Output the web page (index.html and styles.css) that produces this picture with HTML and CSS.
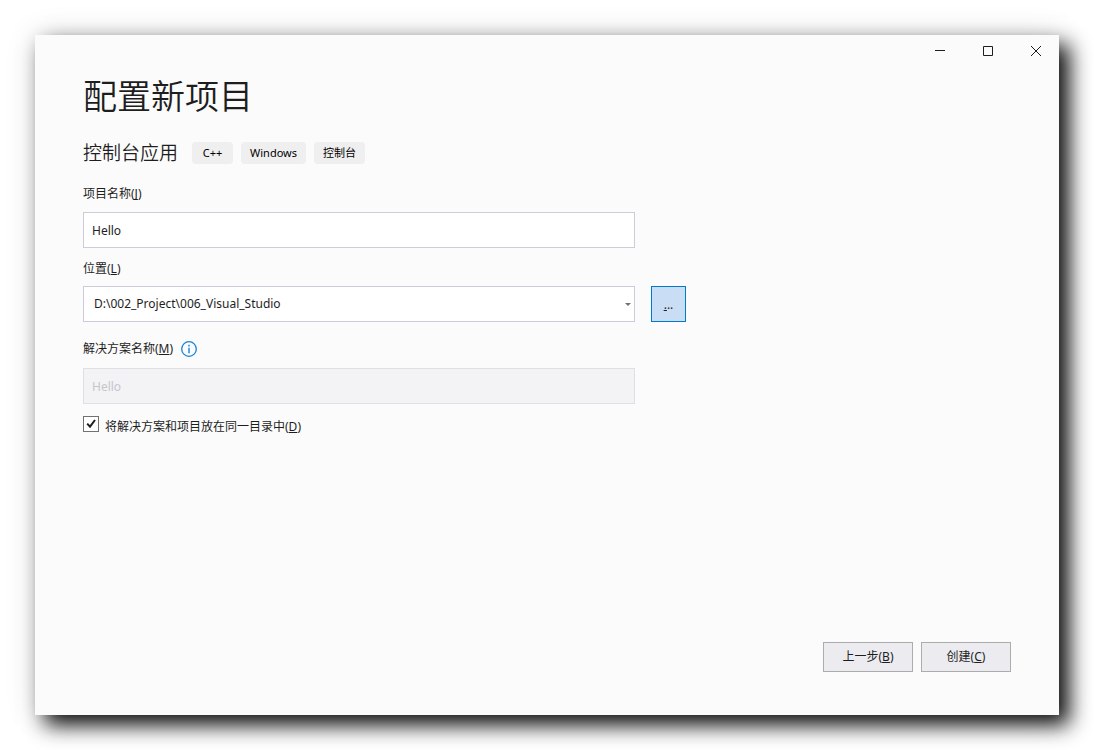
FILE: index.html
```html
<!DOCTYPE html>
<html lang="zh-CN">
<head>
<meta charset="utf-8">
<meta name="viewport" content="width=device-width, initial-scale=1">
<title>配置新项目</title>
<link rel="stylesheet" href="styles.css">
</head>
<body>
<main class="window">
  <header class="titlebar">
    <button class="caption-button" type="button" aria-label="最小化">
      <svg width="12" height="12" viewBox="0 0 12 12" shape-rendering="crispEdges"><path d="M2 5h10v1H2z" fill="#1e1e1e"/></svg>
    </button>
    <button class="caption-button" type="button" aria-label="最大化">
      <svg width="12" height="12" viewBox="0 0 12 12"><path d="M2.5 1.5h9v9h-9z" fill="none" stroke="#1e1e1e"/></svg>
    </button>
    <button class="caption-button" type="button" aria-label="关闭">
      <svg width="12" height="12" viewBox="0 0 12 12"><path d="M2 1l10 10M12 1L2 11" fill="none" stroke="#1e1e1e"/></svg>
    </button>
  </header>
  <form class="content">
    <h1 class="title">配置新项目</h1>
    <div class="template">
      <h2 class="template-name">控制台应用</h2>
      <ul class="tags">
        <li class="tag">C++</li>
        <li class="tag">Windows</li>
        <li class="tag">控制台</li>
      </ul>
    </div>

    <div class="field">
      <label class="label" for="project">项目名称(<u>J</u>)</label>
      <input class="box" id="project" type="text" value="Hello">
    </div>

    <div class="field">
      <label class="label" for="location">位置(<u>L</u>)</label>
      <div class="location">
        <div class="combo">
          <select class="box combo-box" id="location">
            <option>D:\002_Project\006_Visual_Studio</option>
          </select>
          <svg class="arrow" width="6" height="3" viewBox="0 0 6 3"><path d="M0 0h6L3 3z" fill="#717171"/></svg>
        </div>
        <button class="browse" type="button" aria-label="浏览"><u>.</u>..</button>
      </div>
    </div>

    <div class="field solution">
      <div class="label-row">
        <label class="label" for="solution">解决方案名称(<u>M</u>)</label>
        <svg width="16" height="16" viewBox="0 0 16 16"><circle cx="8" cy="8" r="7.3" fill="none" stroke="#1583d8" stroke-width="1.3"/><path d="M7.3 3.8h1.4v1.6H7.3zM7.3 6.8h1.4v5.4H7.3z" fill="#1583d8"/></svg>
      </div>
      <input class="box" id="solution" type="text" value="Hello" disabled>
    </div>

    <div class="check-row">
      <span class="check">
        <input class="check-input" id="same" type="checkbox" checked>
        <svg class="check-mark" width="16" height="16" viewBox="0 0 16 16"><path d="M4.2 7.6L7 10.6 12 4" fill="none" stroke="#1e1e1e" stroke-width="2"/></svg>
      </span>
      <label class="check-label" for="same">将解决方案和项目放在同一目录中(<u>D</u>)</label>
    </div>

    <footer class="actions">
      <button class="action" type="button">上一步(<u>B</u>)</button>
      <button class="action" type="submit">创建(<u>C</u>)</button>
    </footer>
  </form>
</main>
</body>
</html>
```
FILE: styles.css
```css
* {
  box-sizing: border-box;
}

body {
  margin: 0;
  padding: 35px;
  min-height: 100vh;
  display: flex;
  background: #fff;
  color: #1e1e1e;
  font: 12px/16px "Noto Sans", "Noto Sans CJK SC", sans-serif;
}

button,
input,
select {
  font: inherit;
  color: inherit;
}

u {
  text-underline-offset: 1px;
  text-decoration-skip-ink: none;
}

.window {
  flex: 1;
  display: flex;
  flex-direction: column;
  background: #fbfbfb;
  box-shadow: 10px 10px 20px rgba(0, 0, 0, 0.95), 0 0 30px rgba(0, 0, 0, 0.12);
}

.titlebar {
  display: flex;
  justify-content: flex-end;
}

.caption-button {
  display: grid;
  place-items: center;
  width: 48px;
  height: 32px;
  padding: 0;
  border: 0;
  background: transparent;
}

.content {
  flex: 1;
  display: flex;
  flex-direction: column;
  padding: 4px 48px 43px;
}

.title {
  margin: 0;
  font-size: 34px;
  line-height: 50px;
  font-weight: 350;
}

.template {
  display: flex;
  align-items: center;
  gap: 14px;
  margin-top: 18px;
}

.template-name {
  margin: 0;
  font-size: 19px;
  line-height: 28px;
  font-weight: 350;
}

.tags {
  display: flex;
  gap: 8px;
  margin: 0;
  padding: 0;
  list-style: none;
}

.tag {
  min-width: 41px;
  padding: 3px 9px;
  border-radius: 4px;
  background: #efeff0;
  color: #000;
  font-size: 11px;
  text-align: center;
}

.field {
  display: flex;
  flex-direction: column;
  gap: 9px;
  max-width: 552px;
  margin-top: 13px;
}

.template + .field {
  gap: 10px;
  margin-top: 19px;
}

.box {
  width: 100%;
  height: 36px;
  padding: 0 8px;
  border: 1px solid #ccccda;
  border-radius: 0;
  background: #fff;
}

.box:disabled {
  border-color: #dfdfe6;
  background: #f3f3f6;
  color: #c6c6ca;
}

.location {
  display: flex;
  gap: 16px;
}

.combo {
  position: relative;
  flex: 0 0 100%;
}

.combo-box {
  display: block;
  appearance: none;
  padding: 0 10px;
}

.arrow {
  position: absolute;
  right: 4px;
  top: 17px;
  pointer-events: none;
}

.browse {
  flex: 0 0 35px;
  padding: 2px 0 0;
  border: 1px solid #007acc;
  background: #c9def5;
}

.field.solution {
  gap: 11px;
  margin-top: 19px;
}

.label-row {
  display: flex;
  align-items: center;
  gap: 8px;
}

.check-row {
  display: flex;
  gap: 6px;
  margin-top: 12px;
}

.check {
  position: relative;
  display: flex;
  align-self: flex-start;
}

.check-input {
  appearance: none;
  width: 16px;
  height: 16px;
  margin: 0;
  border: 1px solid #717171;
  background: #fff;
}

.check-mark {
  position: absolute;
  inset: 0;
  display: none;
  pointer-events: none;
}

.check-input:checked + .check-mark {
  display: block;
}

.check-label {
  padding-top: 3px;
}

.actions {
  display: flex;
  justify-content: flex-end;
  gap: 8px;
  margin-top: auto;
}

.action {
  width: 90px;
  height: 30px;
  padding: 0;
  border: 1px solid #acacac;
  background: #ececf0;
}
```
